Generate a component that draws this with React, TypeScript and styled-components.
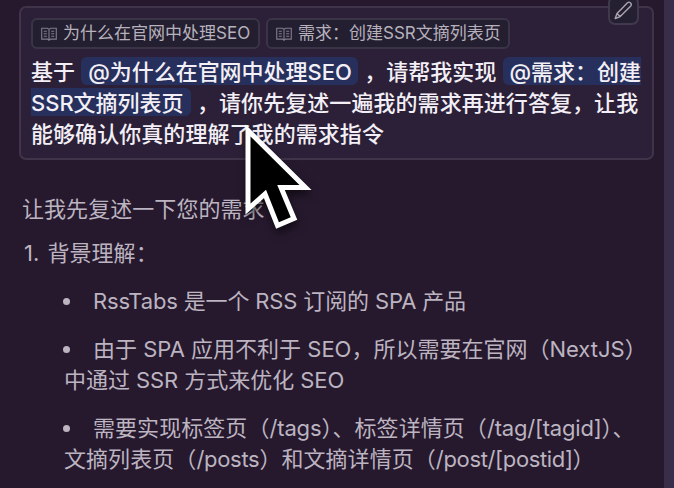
import React from "react";
import styled, { createGlobalStyle } from "styled-components";

const Global = createGlobalStyle`
  * { box-sizing: border-box; }
  html, body { margin: 0; background: #26192e; overflow: hidden; }
  body { font-family: Inter, "Noto Sans CJK SC", sans-serif; }
`;

const Page = styled.div`
  position: relative;
  display: flex;
  width: 674px;
  height: 488px;
  overflow: hidden;
  background: #26192e;
`;

const Conversation = styled.main`
  flex: 1;
  padding: 6px 10px 0 19px;
`;

const Gutter = styled.aside`
  width: 10px;
  background: #392e49;
`;

const Prompt = styled.section`
  position: relative;
  height: 154px;
  padding: 10px 0 0 10px;
  border: 2px solid #40344a;
  border-radius: 7px;
  background: #2c2038;
`;

const EditButton = styled.button`
  position: absolute;
  top: -12px;
  right: 13px;
  display: flex;
  align-items: center;
  justify-content: center;
  width: 31px;
  height: 29px;
  padding: 0 0 1px;
  border: 2px solid #40384c;
  border-radius: 7px;
  background: #242032;
  color: #aaa3b1;
`;

const Chips = styled.div`
  display: flex;
  gap: 6px;
  height: 31px;
`;

const Chip = styled.div<{ $width: number }>`
  display: flex;
  align-items: center;
  gap: 6px;
  width: ${(p) => p.$width}px;
  height: 31px;
  padding-left: 8px;
  border: 2px solid #3b3447;
  border-radius: 6px;
  background: #231f31;
  color: #b7b1bc;
  font-size: 17px;
  line-height: 27px;
  white-space: nowrap;
`;

const PromptText = styled.div`
  margin-top: 8px;
  color: #f3eff6;
  font-weight: 500;
`;

const Line = styled.div`
  height: 31px;
  font-size: 22px;
  letter-spacing: 0.06px;
  line-height: 31px;
  white-space: pre;
`;

const Run = styled.span<{ $left?: number }>`
  margin-left: ${(p) => p.$left ?? 0}px;
`;

const Latin = styled.span<{ $track?: number }>`
  letter-spacing: ${(p) => p.$track ?? -0.15}px;
`;

const Mention = styled.span<{ $edge: "both" | "start" | "end"; $width: number }>`
  display: inline-block;
  width: ${(p) => p.$width}px;
  height: 28px;
  padding-left: ${(p) => (p.$edge === "end" ? 0 : 7)}px;
  margin-left: ${(p) => (p.$edge === "end" ? 0 : 6)}px;
  border-radius: ${(p) =>
    p.$edge === "both" ? "6px" : p.$edge === "start" ? "6px 0 0 6px" : "0 6px 6px 0"};
  background: #27305c;
  letter-spacing: -0.02px;
  line-height: 30px;
  vertical-align: top;
`;

const Answer = styled.article`
  padding-left: 4px;
  color: #bcb4c0;
`;

const Intro = styled(Line)`
  margin-top: 34px;
  margin-left: -1px;
`;

const Heading = styled(Line)`
  display: flex;
  gap: 8px;
  margin-top: 13px;
  padding-left: 1px;
`;

const Points = styled.ul`
  display: flex;
  flex-direction: column;
  gap: 17px;
  margin: 17px 0 0;
  padding: 0 0 0 41px;
  list-style: none;
`;

const First = styled(Line)`
  display: flex;
  align-items: center;
  &::before {
    content: "";
    width: 7px;
    height: 7px;
    margin-right: 23px;
    margin-left: -1px;
    border-radius: 50%;
    background: #bcb4c0;
  }
`;

const Cursor = styled.svg`
  position: absolute;
  left: 235px;
  top: 115px;
  filter: drop-shadow(1px 5px 4px rgba(0, 0, 0, 0.55));
`;

const BookIcon = () => (
  <svg width="16" height="14" viewBox="0 0 16 14" fill="none" stroke="#817b8b" strokeWidth="1.1">
    <path d="M.7 1.3h5.8L8 2.4l1.5-1.1h5.8v10.8H9.5L8 13.3l-1.5-1.2H.7zM8 2.4v10.9M2.8 4.2h3M2.8 6.7h3M2.8 9.2h3M10.2 4.2h3M10.2 6.7h3M10.2 9.2h3" />
  </svg>
);

const PencilIcon = () => (
  <svg width="19" height="19" viewBox="0 0 19 19" fill="none" stroke="currentColor" strokeWidth="1.4" strokeLinejoin="round">
    <path d="M1.2 17.5 3 12.6 13.5 1.8Q15 .4 16.5 1.9T16.8 4.9L6.2 15.6zM3 12.6l3.2 3" />
  </svg>
);

export default function App() {
  return (
    <>
      <Global />
      <Page>
        <Conversation>
          <Prompt>
            <EditButton aria-label="编辑"><PencilIcon /></EditButton>
            <Chips>
              <Chip $width={229}><BookIcon /><span>为什么在官网中处理SEO</span></Chip>
              <Chip $width={244}><BookIcon /><span>需求：创建SSR文摘列表页</span></Chip>
            </Chips>
            <PromptText>
              <Line>
                基于<Mention $edge="both" $width={277}>@为什么在官网中处理SEO</Mention>
                <Run $left={6}>，请帮我实现</Run>
                <Mention $edge="start" $width={138}>@需求：创建</Mention>
              </Line>
              <Line>
                <Mention $edge="end" $width={160}>SSR文摘列表页</Mention>
                <Run $left={6}>，请你先复述一遍我的需求再进行答复，让我</Run>
              </Line>
              <Line>能够确认你真的理解了我的需求指令</Line>
            </PromptText>
          </Prompt>
          <Answer>
            <Intro>让我先复述一下您的需求</Intro>
            <Heading><span>1.</span><span>背景理解：</span></Heading>
            <Points>
              <li><First><Latin>RssTabs 是一个 RSS 订阅的 SPA 产品</Latin></First></li>
              <li>
                <First><Latin $track={0}>由于 SPA 应用不利于 SEO，所以需要在官网（NextJS）</Latin></First>
                <Line><Latin $track={-0.05}>中通过 SSR 方式来优化 SEO</Latin></Line>
              </li>
              <li>
                <First><span>需要实现标签页（<Latin>/tags</Latin>）、标签详情页（<Latin $track={-0.2}>/tag/[tagid]</Latin>）、</span></First>
                <Line>文摘列表页（<Latin $track={-0.3}>/posts</Latin>）和文摘详情页（<Latin $track={-0.35}>/post/[postid]</Latin>）</Line>
              </li>
            </Points>
          </Answer>
        </Conversation>
        <Gutter />
        <Cursor width="90" height="125" viewBox="235 115 90 125">
          <path d="M248 130.500V209L265 194L277.500 225.500L294 218.500L281 187.500H305.500Z" fill="#000" stroke="#fff" strokeWidth="5" />
        </Cursor>
      </Page>
    </>
  );
}
